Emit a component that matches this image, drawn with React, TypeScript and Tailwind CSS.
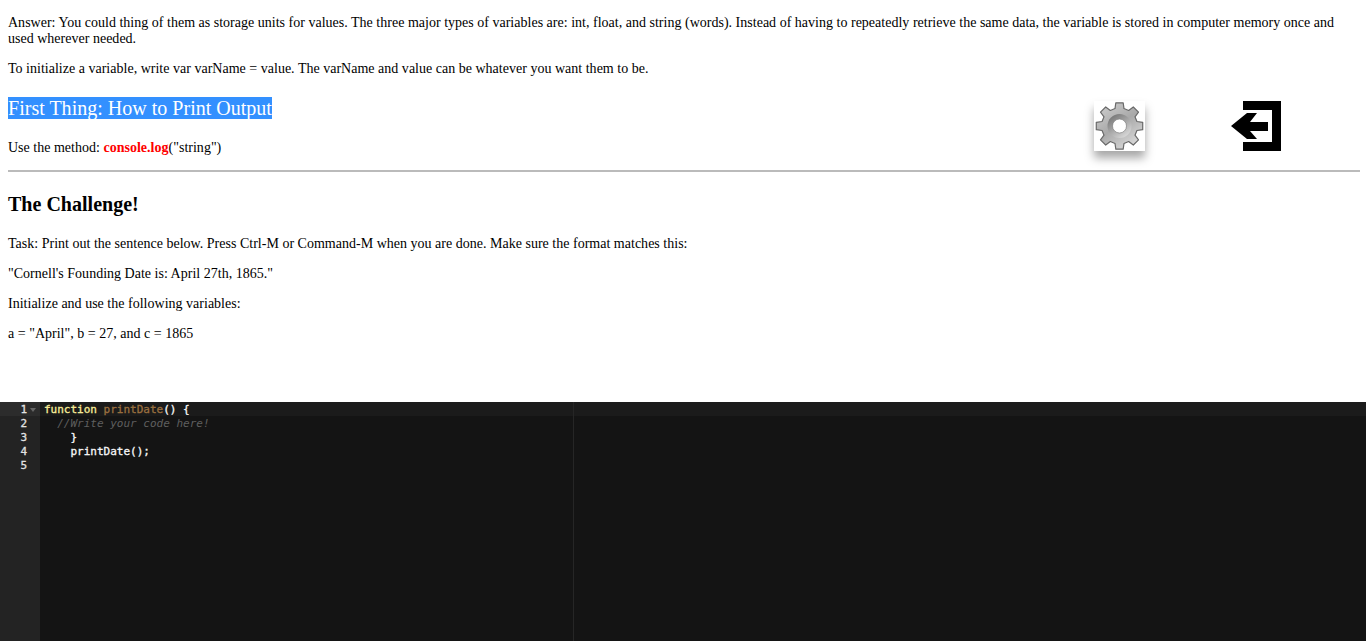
import React from 'react'

function gearPoints() {
  // 8 toothed gear, built from polar points
  const teeth = 8
  const pts: string[] = []
  for (let i = 0; i < teeth; i++) {
    const a = (i / teeth) * Math.PI * 2 - Math.PI / 2
    const s = (Math.PI * 2) / teeth
    const p = (r: number, t: number) =>
      `${(25 + r * Math.cos(t)).toFixed(2)},${(25 + r * Math.sin(t)).toFixed(2)}`
    pts.push(p(18, a - s * 0.32), p(23.5, a - s * 0.2), p(23.5, a + s * 0.2), p(18, a + s * 0.32))
  }
  return pts.join(' ')
}

function GearIcon() {
  return (
    <div className="absolute left-[1094px] top-[101px] w-[51px] h-[50px] bg-white shadow-[0_7px_9px_rgba(0,0,0,0.35)]">
      <svg viewBox="0 0 50 50" className="w-[51px] h-[50px] blur-[0.4px]">
        <defs>
          <linearGradient id="gearFill" x1="0.1" y1="0" x2="0.8" y2="1">
            <stop offset="0" stopColor="#cfcfcf" />
            <stop offset="0.5" stopColor="#a9a9a9" />
            <stop offset="1" stopColor="#dedede" />
          </linearGradient>
          <linearGradient id="hubFill" x1="0.1" y1="0" x2="0.8" y2="1">
            <stop offset="0" stopColor="#6e6e6e" />
            <stop offset="1" stopColor="#dddddd" />
          </linearGradient>
        </defs>
        <polygon points={gearPoints()} fill="url(#gearFill)" stroke="#6a6a6a" strokeWidth="1.2" strokeLinejoin="round" />
        <circle cx="25" cy="25" r="12" fill="url(#hubFill)" />
        <circle cx="25" cy="25" r="7" fill="#fff" stroke="#808080" strokeWidth="0.7" />
      </svg>
    </div>
  )
}

function ExitIcon() {
  return (
    <svg viewBox="0 0 50 50" className="absolute left-[1231px] top-[101px] w-[50px] h-[50px]">
      <path d="M12 0H50V50H12V41H41V9H12Z" fill="#000" />
      <path d="M0 25L16 12H26L19 21H37V30H19L26 38H16Z" fill="#000" />
    </svg>
  )
}

function CodeLine({ active, children }: { active?: boolean; children?: React.ReactNode }) {
  return <div className={`h-[14px] pl-[4px] leading-[16px] whitespace-pre ${active ? 'bg-[#1b1b1b]' : ''}`}>{children}</div>
}

export default function App() {
  return (
    <div className="h-[641px] flex flex-col overflow-hidden bg-white text-black font-['Liberation_Serif',serif] text-[14px] leading-[16px] tracking-[0.012px]">
      {/* Lesson text */}
      <div className="relative h-[402px] shrink-0 pl-2 pr-[6px] pt-[15px]">
        <p className="mb-[14px] pr-[2px]">
          Answer: You could thing of them as storage units for values. The three major types of variables are: int, float, and string (words). Instead of having to repeatedly retrieve the same data, the variable is stored in computer memory once and used wherever needed.
        </p>
        <p>To initialize a variable, write var varName = value. The varName and value can be whatever you want them to be.</p>

        <h2 className="mt-[20px] text-[20px] leading-[23px] font-normal">
          <span className="bg-[#3390ff] text-white">First Thing: How to Print Output</span>
        </h2>
        <p className="mt-[20px]">
          Use the method: <span className="font-bold text-[#ff0000]">console.log</span>("string")
        </p>
        <hr className="mt-[14px] border-0 border-t-2 border-[#bbbbbb]" />

        <h3 className="mt-[21px] text-[20px] leading-[23px] font-bold">The Challenge!</h3>
        <p className="mt-[20px]">Task: Print out the sentence below. Press Ctrl-M or Command-M when you are done. Make sure the format matches this:</p>
        <p className="mt-[14px]">"Cornell's Founding Date is: April 27th, 1865."</p>
        <p className="mt-[14px]">Initialize and use the following variables:</p>
        <p className="mt-[14px]">a = "April", b = 27, and c = 1865</p>

        <GearIcon />
        <ExitIcon />
      </div>

      {/* Code editor */}
      <div className="flex-1 flex bg-[#141414] text-[#f8f8f8] font-['DejaVu_Sans_Mono',monospace] text-[11px] tracking-normal">
        <div className="w-[40px] shrink-0 bg-[#232323] text-[#e2e2e2] [-webkit-text-stroke:0.3px]">
          {[1, 2, 3, 4, 5].map((n) => (
            <div key={n} className={`relative h-[14px] pr-[13px] leading-[16px] text-right ${n === 1 ? 'bg-[#2c2c2c]' : ''}`}>
              {n}
              {n === 1 && <span className="absolute right-[4px] top-[6px] w-0 h-0 border-x-[3px] border-x-transparent border-t-[4px] border-t-[#666666]" />}
            </div>
          ))}
        </div>
        <div className="flex-1 flex">
          <div className="w-[534px] shrink-0 border-r border-[#262626] [-webkit-text-stroke:0.3px]">
            <CodeLine active>
              <span className="text-[#f9ee98]">function</span> <span className="text-[#9b703f]">printDate</span>() {'{'}
            </CodeLine>
            <CodeLine>
              <span className="italic text-[#5f5f5f] [-webkit-text-stroke:0px]">  //Write your code here!</span>
            </CodeLine>
            <CodeLine>    {'}'}</CodeLine>
            <CodeLine>    printDate();</CodeLine>
            <CodeLine />
          </div>
          <div className="flex-1">
            <div className="h-[14px] bg-[#1b1b1b]" />
          </div>
        </div>
      </div>
    </div>
  )
}
